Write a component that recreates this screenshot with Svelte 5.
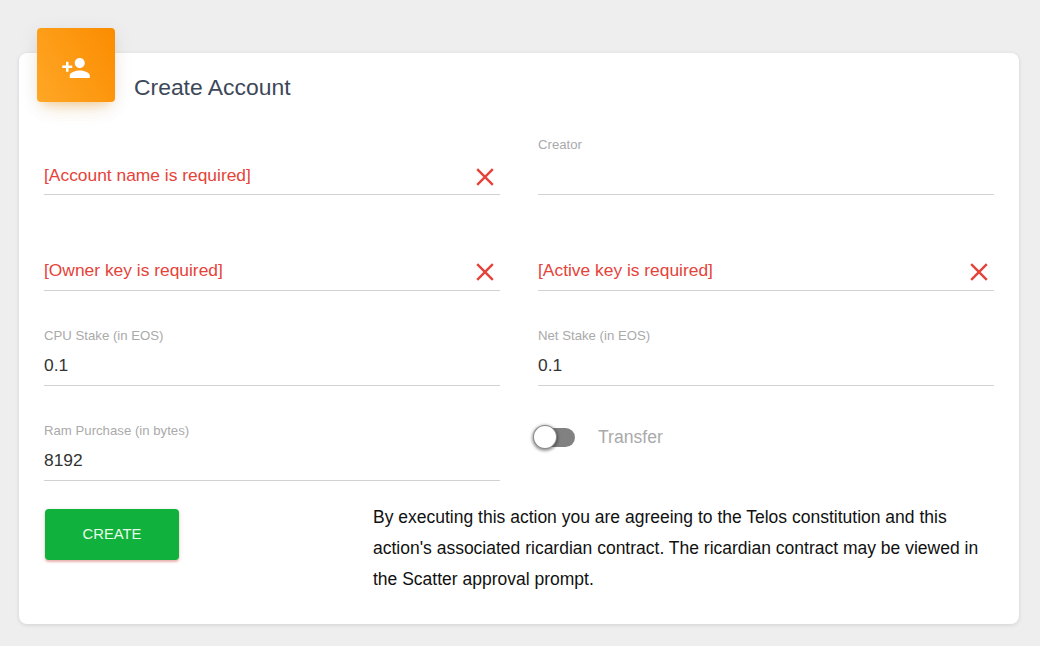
<script>
  const rows = [
    { label: "", error: "[Account name is required]" },
    { label: "Creator", value: "" },
    { label: "", error: "[Owner key is required]" },
    { label: "", error: "[Active key is required]" },
    { label: "CPU Stake (in EOS)", value: "0.1" },
    { label: "Net Stake (in EOS)", value: "0.1" },
    { label: "Ram Purchase (in bytes)", value: "8192" },
  ];
</script>

<main class="page">
  <section class="card">
    <header class="card-header">
      <div class="card-icon">
        <svg viewBox="0 0 24 24" width="30" height="30" fill="#fff">
          <path d="M15 12c2.21 0 4-1.79 4-4s-1.79-4-4-4-4 1.79-4 4 1.79 4 4 4zm-9-2V7H4v3H1v2h3v3h2v-3h3v-2H6zm9 4c-2.67 0-8 1.34-8 4v2h16v-2c0-2.66-5.33-4-8-4z" />
        </svg>
      </div>
      <h2>Create Account</h2>
    </header>

    <div class="fields">
      {#each rows as row}
        <div class="field">
          <div class="field-label">{row.label}</div>
          <div class="field-input">
            {#if row.error}
              <span class="error">{row.error}</span>
              <svg class="close" viewBox="0 0 18 18" width="18" height="18">
                <path d="M1.2 1.2 16.8 16.8M16.8 1.2 1.2 16.8" stroke="#e5433a" stroke-width="2.4" fill="none" />
              </svg>
            {:else}
              <span>{row.value}</span>
            {/if}
          </div>
        </div>
      {/each}
      <div class="transfer">
        <div class="switch"><div class="knob"></div></div>
        <span>Transfer</span>
      </div>
    </div>

    <footer class="card-footer">
      <button class="create">Create</button>
      <p>
        By executing this action you are agreeing to the Telos constitution and this
        action's associated ricardian contract. The ricardian contract may be viewed in
        the Scatter approval prompt.
      </p>
    </footer>
  </section>
</main>

<style>
  :global(body) {
    margin: 0;
    background: #eeeeee;
    font-family: "Liberation Sans", Arial, sans-serif;
  }
  .page {
    padding: 53px 21px 22px 19px;
  }
  .card {
    height: 571px;
    box-sizing: border-box;
    background: #fff;
    border-radius: 8px;
    box-shadow: 0 1px 4px rgba(0, 0, 0, 0.12);
    padding: 0 25px;
  }
  .card-header {
    display: flex;
    height: 74px;
  }
  .card-icon {
    width: 78px;
    height: 74px;
    box-sizing: border-box;
    padding-top: 6px;
    margin: -25px 0 0 -7px;
    border-radius: 4px;
    background: linear-gradient(60deg, #ffa726, #fb8c00);
    box-shadow: 0 12px 20px -10px rgba(255, 152, 0, 0.28), 0 4px 20px 0 rgba(0, 0, 0, 0.08), 0 7px 8px -5px rgba(255, 152, 0, 0.2);
    display: flex;
    align-items: center;
    justify-content: center;
  }
  h2 {
    margin: 19px 0 0 19px;
    font-size: 22.9px;
    font-weight: 400;
    line-height: 30px;
    color: #3c4858;
  }
  .fields {
    display: grid;
    grid-template-columns: 456px 456px;
    column-gap: 38px;
    row-gap: 36px;
    margin-top: 9px;
  }
  .field {
    height: 59.33px;
    box-sizing: border-box;
    border-bottom: 1px solid #d2d2d2;
  }
  .field-label {
    height: 18px;
    font-size: 13.2px;
    line-height: 17px;
    color: #aaaaaa;
  }
  .field-input {
    display: flex;
    align-items: center;
    justify-content: space-between;
    height: 41px;
    font-size: 17.4px;
    color: #333333;
  }
  .error {
    margin-top: 2px;
    color: #e5433a;
  }
  .close {
    margin: 4px 6px 0 0;
  }
  .transfer {
    display: flex;
    align-items: center;
    gap: 23px;
    height: 31px;
    margin-left: -3px;
    font-size: 17.6px;
    color: #aaaaaa;
  }
  .switch {
    position: relative;
    width: 40px;
    height: 19px;
    border-radius: 10px;
    background: #818181;
  }
  .knob {
    position: absolute;
    left: -2px;
    top: -3px;
    width: 24px;
    height: 24px;
    box-sizing: border-box;
    border-radius: 50%;
    background: #fff;
    border: 1px solid rgba(0, 0, 0, 0.45);
    box-shadow: 0 1px 3px 1px rgba(0, 0, 0, 0.4);
  }
  .card-footer {
    display: flex;
    align-items: flex-start;
    margin-top: 27.67px;
  }
  .create {
    width: 134px;
    height: 51px;
    margin-left: 1px;
    border: none;
    border-radius: 4px;
    background: #10b13c;
    color: #e8fbe8;
    font-family: inherit;
    font-size: 14.8px;
    text-transform: uppercase;
    box-shadow: 0 2px 2px rgba(244, 67, 54, 0.3), 0 1px 4px rgba(0, 0, 0, 0.15);
  }
  p {
    margin: -7px 0 0 194px;
    width: 620px;
    font-size: 17.5px;
    line-height: 31px;
    color: #111111;
  }
</style>
